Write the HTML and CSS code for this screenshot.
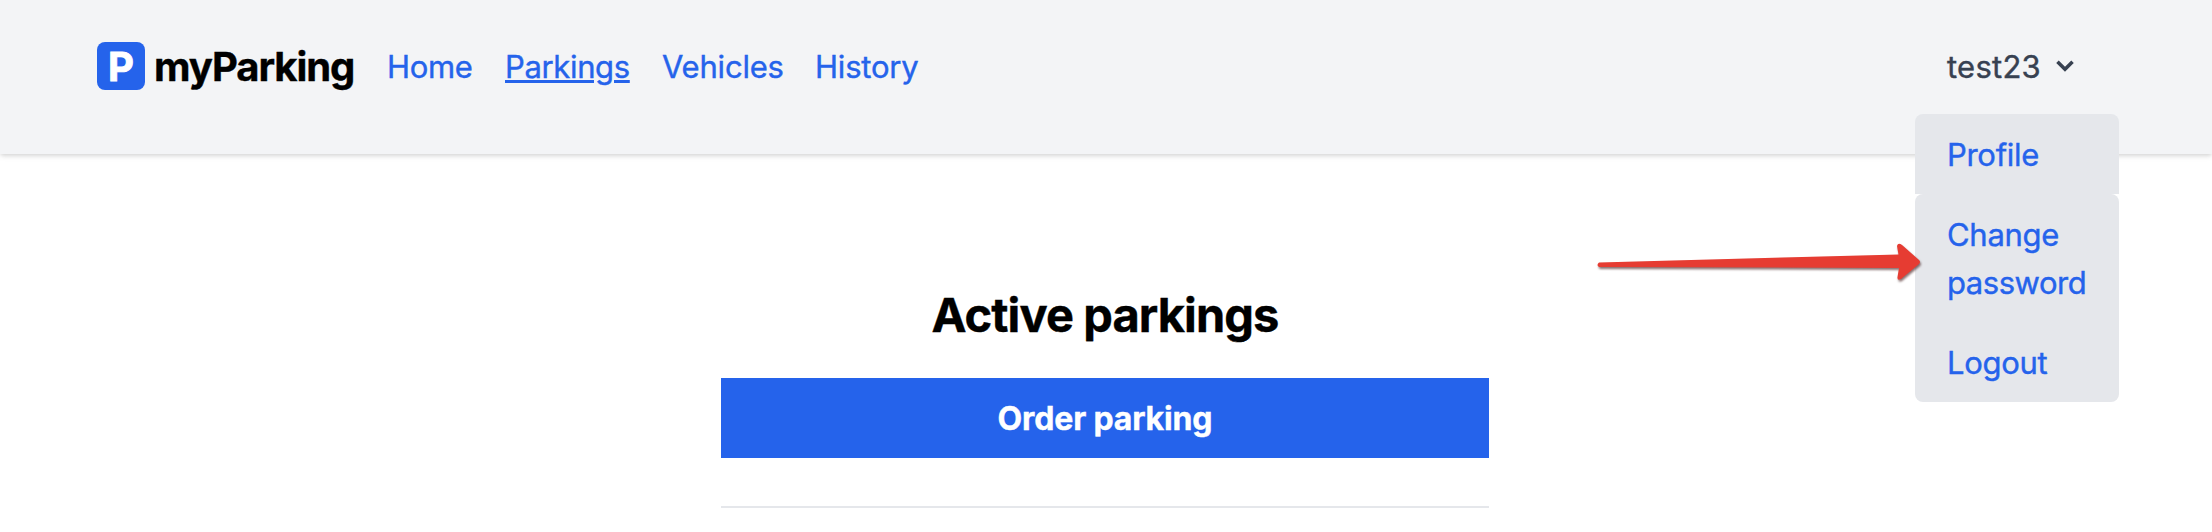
FILE: index.html
```
<!DOCTYPE html>
<html lang="en">
<head>
<meta charset="utf-8">
<title>myParking</title>
<link rel="stylesheet" href="styles.css">
</head>
<body>
<header class="header">
  <a class="brand"><span class="logo">P</span><span class="brand-name">myParking</span></a>
  <nav class="nav">
    <a class="link home">Home</a>
    <a class="link active">Parkings</a>
    <a class="link vehicles">Vehicles</a>
    <a class="link history">History</a>
  </nav>
  <div class="user">
    <span class="user-name">test23</span>
    <svg class="chevron" viewBox="0 0 20 20"><path d="M5.293 7.293 10 12l4.707-4.707" fill="none" stroke="currentColor" stroke-width="2.2"/></svg>
    <div class="menu">
      <a class="item profile">Profile</a>
      <a class="item change">Change <span class="password">password</span></a>
      <a class="item logout">Logout</a>
    </div>
  </div>
</header>
<main class="main">
  <h1 class="title"><span>Active parkings</span></h1>
  <a class="button">Order parking</a>
  <div class="divider"></div>
</main>
<svg class="arrow" viewBox="0 0 330 46">
  <path class="arrow-shape" d="M4 22.5 L303.500 14.500 L302 6 Q303 2 307 5 L324 20 Q326 22 324 24 L306 39 Q302 41 302.500 37 L304 28 L4 27 Q1 25 4 22.500Z"/>
</svg>
</body>
</html>
```
FILE: styles.css
```
* { box-sizing: border-box; }
body {
  margin: 0;
  height: 532px;
  overflow: hidden;
  background: #fff;
  color: #000;
  font: 400 31px/48px Inter, sans-serif;
  -webkit-text-stroke: .4px currentColor;
  position: relative;
}
.header {
  height: 154px;
  padding: 42px 93px 0 97px;
  display: flex;
  align-items: flex-start;
  background: #f3f4f6;
  box-shadow: 0 2px 6px rgba(0, 0, 0, .1), 0 2px 4px -1px rgba(0, 0, 0, .1);
}
.brand { display: flex; gap: 9px; width: 290px; font-weight: 700; }
.logo {
  width: 48px;
  height: 48px;
  border-radius: 8px;
  background: #2563eb;
  color: #fff;
  font-size: 40px;
  font-weight: 700;
  line-height: 49px;
  text-align: center;
  -webkit-text-stroke-width: .9px;
}
.brand-name { font-size: 40px; line-height: 50px; letter-spacing: -1.05px; }
.nav { display: flex; gap: 32px; color: #2563eb; }
.link { height: 50px; line-height: 50px; white-space: nowrap; letter-spacing: -.35px; }
.home { width: 86px; }
.active {
  width: 125px;
  text-decoration: underline;
  text-decoration-thickness: 3px;
  text-underline-offset: 2px;
}
.vehicles { width: 121px; letter-spacing: -.2px; }
.history { letter-spacing: -.2px; }
.user {
  position: relative;
  display: flex;
  align-items: center;
  gap: 8px;
  width: 172px;
  margin-left: auto;
  color: #374151;
}
.user-name { width: 94px; line-height: 50px; height: 48px; letter-spacing: .25px; }
.chevron { width: 32px; height: 32px; }
.menu {
  position: absolute;
  top: 72px;
  left: -32px;
  width: 204px;
  color: #2563eb;
}
.item {
  display: block;
  padding: 17px 28px 15px 32px;
  background: #e5e7eb;
  letter-spacing: -.3px;
}
.password { letter-spacing: -.45px; }
.profile, .change { border-radius: 8px 8px 0 0; }
.logout { border-radius: 0 0 8px 8px; }
.main { width: 768px; margin: 0 auto; padding-top: 129px; position: relative; left: -1px; }
.title {
  margin: 0 0 31px;
  font-size: 47px;
  line-height: 64px;
  font-weight: 700;
  letter-spacing: -.9px;
  text-align: center;
}
.button {
  display: block;
  height: 80px;
  padding: 17px 16px 15px;
  background: #2563eb;
  color: #fff;
  font-size: 32px;
  font-weight: 700;
  letter-spacing: -.15px;
  text-align: center;
}
.divider { height: 2px; margin-top: 48px; background: #e5e7eb; }
.arrow {
  position: absolute;
  left: 1595px;
  top: 240px;
  width: 330px;
  height: 46px;
}
.arrow-shape {
  fill: #e63c32;
  filter: drop-shadow(1px 2px 1px rgba(60, 20, 20, .6));
}
```
